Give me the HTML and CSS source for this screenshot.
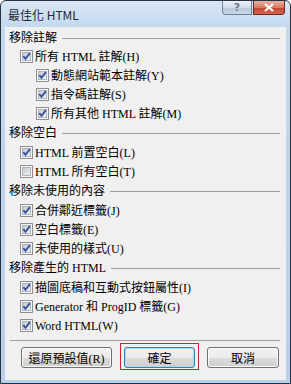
FILE: index.html
```html
<!DOCTYPE html>
<html lang="zh-Hant">
<head>
  <meta charset="UTF-8" />
  <title>最佳化 HTML</title>
  <link rel="stylesheet" href="styles.css">
</head>
<body>
  <svg class="defs" width="0" height="0">
    <defs>
      <linearGradient id="cbg" x1="0" y1="0" x2="1" y2="1">
        <stop offset="0" stop-color="#c3c7cd"/>
        <stop offset="1" stop-color="#f5f5f6"/>
      </linearGradient>
    </defs>
    <symbol id="cb-off" viewBox="0 0 13 13">
      <rect x="0.5" y="0.5" width="12" height="12" fill="#f6f6f6" stroke="#8e8f8f"/>
      <rect x="2.5" y="2.5" width="8" height="8" fill="url(#cbg)" stroke="#b0b4ba"/>
    </symbol>
    <symbol id="cb-on" viewBox="0 0 13 13">
      <rect x="0.5" y="0.5" width="12" height="12" fill="#f6f6f6" stroke="#8e8f8f"/>
      <rect x="2.5" y="2.5" width="8" height="8" fill="url(#cbg)" stroke="#b0b4ba"/>
      <path d="M3.3 6.2 L5.5 8.8 L9.9 3.1" fill="none" stroke="#3552a0" stroke-width="1.9"/>
    </symbol>
  </svg>

  <div class="window">
    <div class="titlebar">
      <span class="title">最佳化 HTML</span>
      <div class="caption-btns">
        <span class="cap help">?</span>
        <span class="cap close">
          <svg width="12" height="9" viewBox="0 0 12 9"><path d="M2 1 L10 8 M10 1 L2 8" stroke="#fff" stroke-width="2.2"/></svg>
        </span>
      </div>
    </div>

    <div class="content">
      <div class="group-label first"><span>移除註解</span></div>
      <div class="row"><svg class="cb"><use href="#cb-on"/></svg><span>所有 HTML 註解(H)</span></div>
      <div class="row sub"><svg class="cb"><use href="#cb-on"/></svg><span>動態網站範本註解(Y)</span></div>
      <div class="row sub"><svg class="cb"><use href="#cb-on"/></svg><span>指令碼註解(S)</span></div>
      <div class="row sub"><svg class="cb"><use href="#cb-on"/></svg><span>所有其他 HTML 註解(M)</span></div>

      <div class="group-label"><span>移除空白</span></div>
      <div class="row"><svg class="cb"><use href="#cb-on"/></svg><span>HTML 前置空白(L)</span></div>
      <div class="row"><svg class="cb"><use href="#cb-off"/></svg><span>HTML 所有空白(T)</span></div>

      <div class="group-label"><span>移除未使用的內容</span></div>
      <div class="row"><svg class="cb"><use href="#cb-on"/></svg><span>合併鄰近標籤(J)</span></div>
      <div class="row"><svg class="cb"><use href="#cb-on"/></svg><span>空白標籤(E)</span></div>
      <div class="row"><svg class="cb"><use href="#cb-on"/></svg><span>未使用的樣式(U)</span></div>

      <div class="group-label"><span>移除產生的 HTML</span></div>
      <div class="row"><svg class="cb"><use href="#cb-on"/></svg><span>描圖底稿和互動式按鈕屬性(I)</span></div>
      <div class="row"><svg class="cb"><use href="#cb-on"/></svg><span>Generator 和 ProgID 標籤(G)</span></div>
      <div class="row"><svg class="cb"><use href="#cb-on"/></svg><span>Word HTML(W)</span></div>

      <div class="sep"></div>

      <div class="footer">
        <button class="btn reset">還原預設值(R)</button>
        <div class="focus-mark">
          <button class="btn ok">確定</button>
        </div>
        <button class="btn cancel">取消</button>
      </div>
    </div>
  </div>
</body>
</html>
```

FILE: styles.css
```css
body {
  margin: 0;
  font-family: "Liberation Serif", "Noto Sans CJK TC", serif;
  font-size: 12px;
  color: #000;
}
.defs {
  position: absolute;
  width: 0;
  height: 0;
}
.window {
  width: 291px;
  height: 384px;
  box-sizing: border-box;
  border: 1px solid #26323f;
  border-radius: 6px 6px 0 0;
  background: linear-gradient(#dae7f5, #c4d8ee 26px, #b9d0ea);
  padding: 0 4px 3px;
  display: flex;
  flex-direction: column;
}
.titlebar {
  height: 26px;
  flex: none;
  display: flex;
  justify-content: space-between;
  align-items: flex-start;
}
.title {
  font-family: "Noto Sans CJK TC", sans-serif;
  font-size: 12px;
  line-height: 16px;
  margin: 6px 0 0 3px;
  color: #1e2a36;
}
.caption-btns {
  display: flex;
  gap: 1px;
  margin-right: 1px;
}
.cap {
  height: 14px;
  box-sizing: border-box;
  display: flex;
  align-items: center;
  justify-content: center;
  border: 1px solid #6d819b;
  border-top: none;
}
.help {
  width: 30px;
  border-radius: 0 0 0 4px;
  background: linear-gradient(#edf3f9, #cfdcea 50%, #b9cadd 51%, #c8d7e8);
  font-family: "DejaVu Sans", sans-serif;
  font-weight: bold;
  font-size: 11px;
  color: #6a7280;
  text-shadow: 0 0 1px #fff;
}
.close {
  width: 32px;
  border-color: #6a2a20;
  border-radius: 0 0 4px 0;
  background: linear-gradient(#eab0a2, #d97a66 50%, #c5442c 51%, #d2664c);
}
.content {
  flex: 1;
  background: #f0f0f0;
  padding: 2px 6px 0 4px;
}
.group-label {
  height: 20px;
  display: flex;
  align-items: center;
  line-height: 16px;
}
.group-label.first {
  height: 18px;
}
.group-label::after {
  content: "";
  flex: 1;
  height: 1px;
  background: #a0a0a0;
  margin-left: 5px;
}
.row {
  height: 19px;
  display: flex;
  align-items: center;
  padding-left: 11px;
  line-height: 16px;
  white-space: nowrap;
}
.row.sub {
  padding-left: 27px;
}
.cb {
  width: 13px;
  height: 13px;
  flex: none;
  margin-right: 2px;
}
.sep {
  height: 1px;
  background: #a0a0a0;
  margin: 5px 0 0 1px;
}
.footer {
  display: flex;
  align-items: flex-start;
  margin-top: 2px;
  padding-left: 12px;
}
.btn {
  height: 21px;
  margin-top: 4px;
  padding: 0;
  font-family: "Liberation Serif", "Noto Sans CJK TC", serif;
  font-size: 12px;
  color: #000;
  border: 1px solid #707070;
  border-radius: 3px;
  background: linear-gradient(#f2f2f2, #ebebeb 50%, #dddddd 51%, #cfcfcf);
  box-shadow: inset 0 0 0 1px #fbfbfb;
}
.reset {
  width: 91px;
}
.cancel {
  width: 72px;
}
.focus-mark {
  border: 1px solid #d0212c;
  padding: 3px 3px 1px;
  margin: 0 8px;
}
.ok {
  width: 71px;
  margin-top: 0;
  border-color: #3c7fb1;
  box-shadow: inset 0 0 0 1px #9fdcf5;
}
```
